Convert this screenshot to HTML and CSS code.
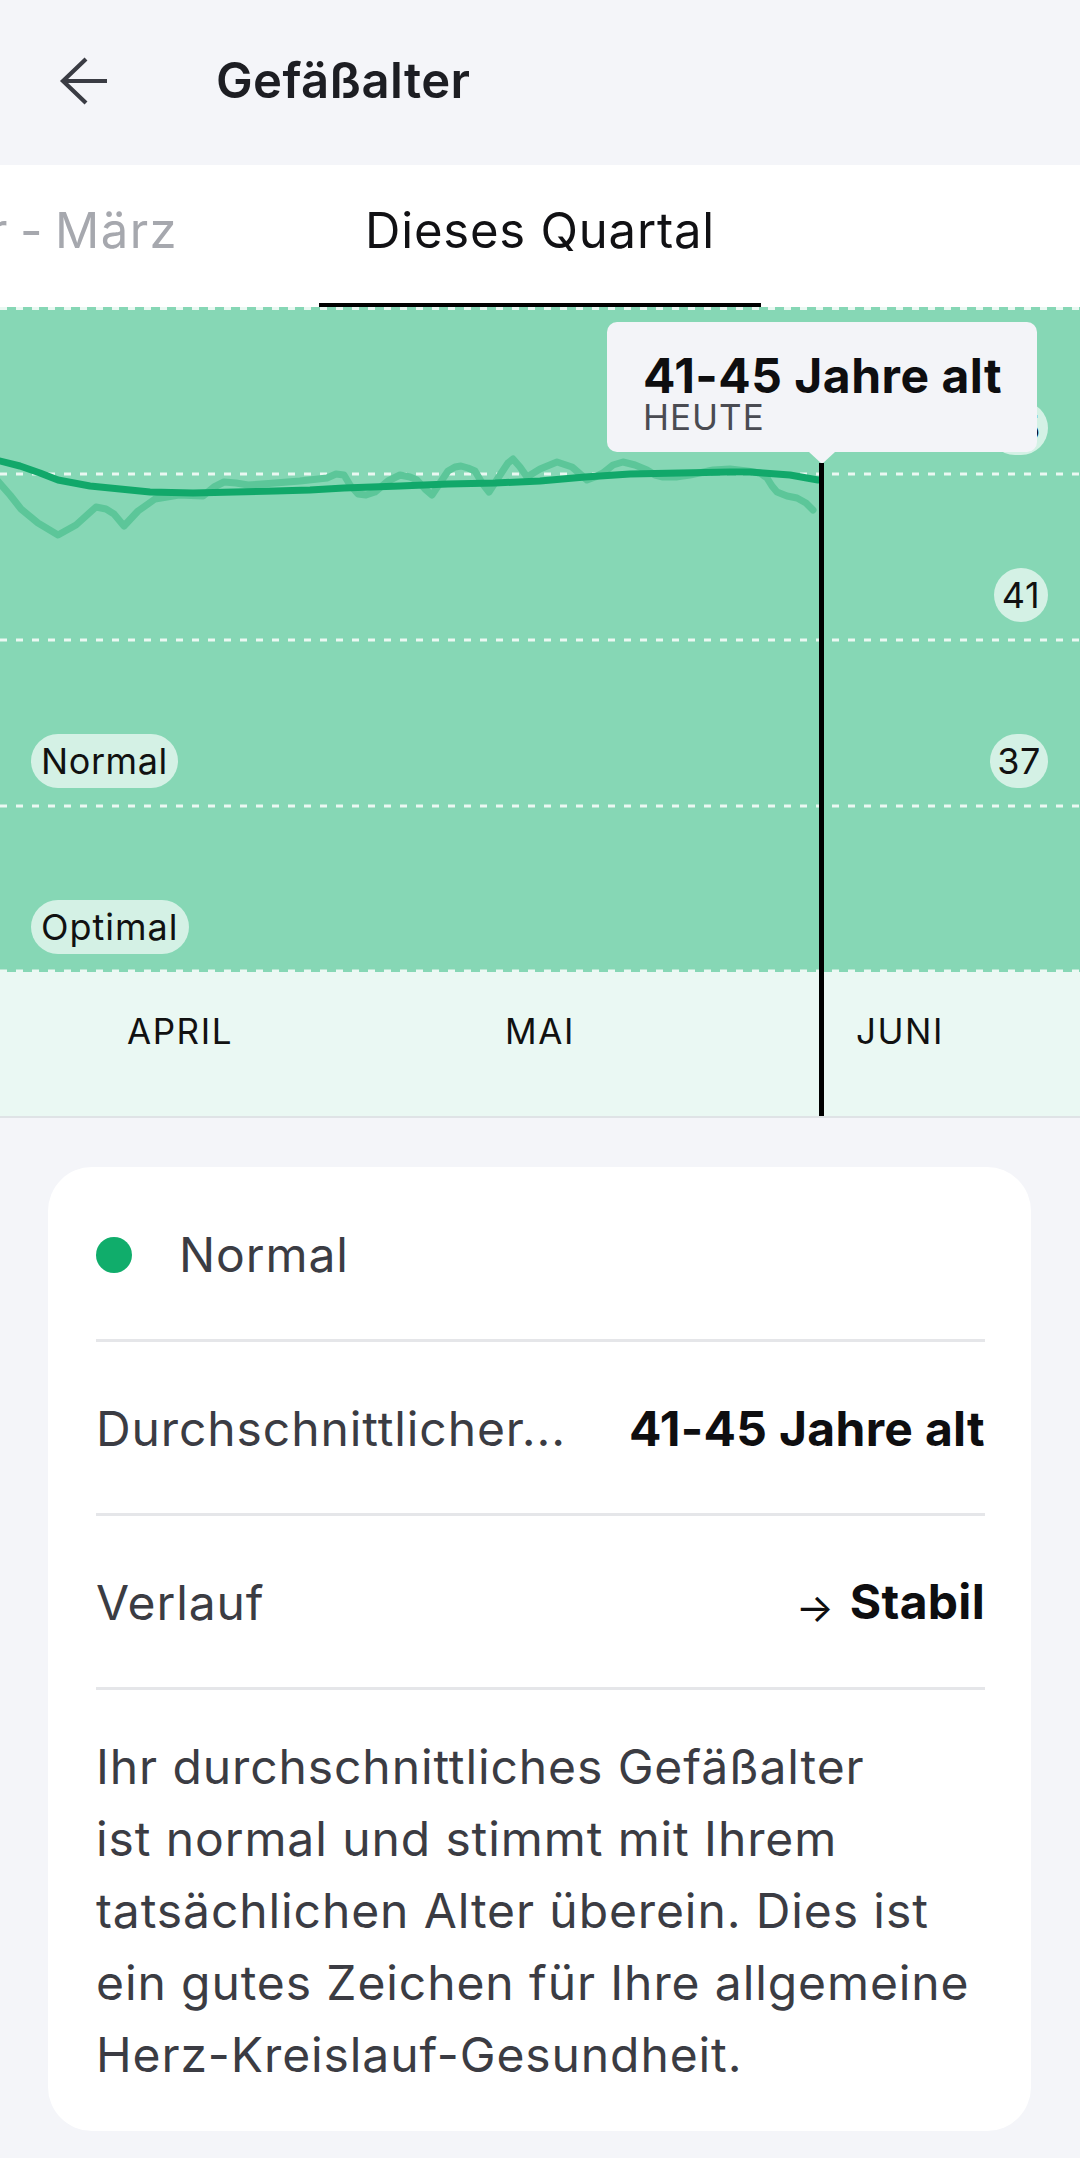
FILE: index.html
```html
<!DOCTYPE html>
<html lang="de">
<head>
<meta charset="utf-8">
<title>Gefäßalter</title>
<link rel="stylesheet" href="styles.css">
</head>
<body>
<div class="screen">
  <header class="topbar">
    <svg class="back" width="48" height="48" viewBox="0 0 48 48" aria-hidden="true">
      <path d="M27 2 L4 24 L27 46 M4 24 H48" fill="none" stroke="#3a3c44" stroke-width="4.2"/>
    </svg>
    <h1 class="title">Gefäßalter</h1>
  </header>

  <nav class="tabs">
    <div class="tab tab-prev">Januar - März</div>
    <div class="tab tab-active">Dieses Quartal</div>
  </nav>

  <section class="chart">
    <div class="plot">
      <svg class="plot-svg" width="1080" height="665" viewBox="0 0 1080 665" aria-hidden="true">
        <g class="grid" stroke="#eaf8f2" stroke-width="3" stroke-dasharray="7 9" fill="none">
          <line x1="0" y1="1.5" x2="1080" y2="1.5"/>
          <line x1="0" y1="167" x2="1080" y2="167"/>
          <line x1="0" y1="333" x2="1080" y2="333"/>
          <line x1="0" y1="499" x2="1080" y2="499"/>
          <line x1="0" y1="664" x2="1080" y2="664"/>
        </g>
        <polyline fill="none" stroke="#5cc699" stroke-width="7" stroke-linejoin="round" stroke-linecap="round"
          points="-4,172 10,188 21,202 38,216 58,228 76,218 96,200 106,202 114,207 124,219 138,204 155,192 179,188 203,189 214,180 224,175 236,176 248,178 262,177 275,176 300,174 327,171 336,167 344,168 350,178 358,187 366,188 375,185 388,174 400,168 410,170 417,173 425,182 432,188 440,176 448,164 455,160 461,159 468,161 475,164 482,176 489,185 500,168 508,156 513,152 520,160 527,170 540,162 557,155 572,160 587,173 595,170 603,166 613,158 623,155 635,158 647,163 655,168 663,170 676,170 690,168 713,163 730,162 747,164 760,166 767,171 772,179 777,185 787,189 797,191 806,196 813,203"/>
        <polyline fill="none" stroke="#11a86a" stroke-width="7" stroke-linejoin="round" stroke-linecap="round"
          points="-4,153 20,159 40,166 58,173 90,179 120,182 150,185 193,186 235,185 275,184 310,183 344,181 400,179 448,177 495,176 540,174 585,170 630,167 680,166 730,165 750,165 763,166 790,168 818,173"/>
      </svg>

      <span class="val val-45">45</span>
      <span class="val val-41">41</span>
      <span class="val val-37">37</span>
      <span class="zone zone-normal">Normal</span>
      <span class="zone zone-optimal">Optimal</span>

      <div class="tooltip">
        <div class="tip-title">41-45 Jahre alt</div>
        <div class="tip-sub">HEUTE</div>
      </div>
    </div>
    <div class="axis">
      <span class="month">APRIL</span>
      <span class="month">MAI</span>
      <span class="month">JUNI</span>
    </div>
    <div class="marker"></div>
  </section>

  <main class="content">
    <div class="card">
      <div class="row row-status">
        <span class="dot"></span>
        <span class="status-text">Normal</span>
      </div>
      <div class="row">
        <span class="label">Durchschnittlicher...</span>
        <span class="value">41-45 Jahre alt</span>
      </div>
      <div class="row">
        <span class="label">Verlauf</span>
        <span class="value"><span class="arrow">→</span> Stabil</span>
      </div>
      <p class="desc">Ihr durchschnittliches Gefäßalter<br>ist normal und stimmt mit Ihrem<br>tatsächlichen Alter überein. Dies ist<br>ein gutes Zeichen für Ihre allgemeine<br>Herz-Kreislauf-Gesundheit.</p>
    </div>
  </main>
</div>
</body>
</html>
```

FILE: styles.css
```css
* {
  box-sizing: border-box;
}

html, body {
  margin: 0;
  padding: 0;
}

body {
  background: #f4f5f9;
  font-family: Inter, "Noto Sans", "Liberation Sans", sans-serif;
  color: #3b3c43;
}

.screen {
  width: 1080px;
  height: 2158px;
  overflow: hidden;
}

/* Header */
.topbar {
  height: 165px;
  display: flex;
  align-items: center;
  padding: 0 0 4px 59px;
  background: #f4f5f9;
}

.back {
  flex: none;
  display: block;
}

.title {
  margin: 0 0 0 109px;
  font-size: 49px;
  line-height: 49px;
  font-weight: 600;
  color: #1d1e23;
  letter-spacing: 0.4px;
}

/* Tabs */
.tabs {
  height: 142px;
  display: flex;
  background: #ffffff;
  overflow: hidden;
}

.tab {
  flex: none;
  font-size: 49px;
  line-height: 56px;
  letter-spacing: 0.8px;
  padding-top: 38px;
  white-space: nowrap;
}

.tab-prev {
  width: 400px;
  margin-left: -222px;
  text-align: right;
  color: #a6a8ae;
  letter-spacing: 1.4px;
  word-spacing: -4px;
}

.tab-active {
  width: 442px;
  margin-left: 141px;
  text-align: center;
  color: #111114;
  border-bottom: 4px solid #000;
}

/* Chart */
.chart {
  position: relative;
}

.plot {
  position: relative;
  height: 665px;
  background: #86d7b5;
  overflow: hidden;
}

.plot-svg {
  display: block;
}

.val,
.zone {
  position: absolute;
  height: 54px;
  line-height: 54px;
  border-radius: 27px;
  background: #d4f1e5;
  color: #111;
  font-size: 36px;
  letter-spacing: 0.6px;
  text-align: center;
  white-space: nowrap;
}

.val {
  right: 32px;
  min-width: 54px;
  padding: 0 7px;
}

.val-45 { top: 94px; }
.val-41 { top: 261px; }
.val-37 { top: 427px; }

.zone {
  left: 31px;
  padding: 0 10px;
}

.zone-normal { top: 427px; }
.zone-optimal { top: 593px; letter-spacing: 1px; }

.tooltip {
  position: absolute;
  left: 607px;
  top: 15px;
  width: 430px;
  height: 130px;
  padding: 30px 36px 0;
  background: #f3f4f8;
  border-radius: 10px;
}

.tooltip::after {
  content: "";
  position: absolute;
  left: 50%;
  top: 100%;
  margin-left: -13px;
  border-left: 13px solid transparent;
  border-right: 13px solid transparent;
  border-top: 12px solid #f3f4f8;
}

.tip-title {
  font-size: 48px;
  line-height: 48px;
  font-weight: 700;
  letter-spacing: 0.5px;
  color: #0e0e10;
  white-space: nowrap;
}

.tip-sub {
  font-size: 35px;
  line-height: 34px;
  letter-spacing: 1px;
  color: #4a4b52;
}

.axis {
  height: 146px;
  display: grid;
  grid-template-columns: repeat(3, 1fr);
  background: #eaf8f3;
  border-bottom: 2px solid #dfe3e6;
}

.month {
  text-align: center;
  font-size: 35px;
  line-height: 36px;
  letter-spacing: 1.6px;
  padding-top: 41px;
  color: #111;
}

.marker {
  position: absolute;
  left: 819px;
  top: 156px;
  bottom: 2px;
  width: 5px;
  background: #000;
}

/* Card */
.content {
  padding: 49px 49px 0 48px;
}

.card {
  background: #ffffff;
  border-radius: 44px;
  padding: 0 46px 0 48px;
}

.row {
  display: flex;
  align-items: center;
  justify-content: space-between;
  height: 174px;
  padding-top: 1px;
  border-bottom: 3px solid #e5e6e9;
  font-size: 48px;
  letter-spacing: 0.9px;
  white-space: nowrap;
}

.row-status {
  justify-content: flex-start;
  height: 175px;
  padding-top: 3px;
}

.dot {
  width: 36px;
  height: 36px;
  border-radius: 50%;
  background: #10ad6b;
  margin-right: 47px;
}

.label,
.status-text {
  color: #3b3c43;
}

.value {
  font-weight: 700;
  letter-spacing: 0.3px;
  color: #0e0e10;
}

.arrow {
  font-size: 40px;
  font-weight: 400;
  vertical-align: -3px;
  margin-right: 4px;
}

.desc {
  margin: 0;
  padding: 41px 0 40px;
  font-size: 48px;
  line-height: 72px;
  letter-spacing: 0.9px;
  color: #3b3c43;
  white-space: nowrap;
}
```
